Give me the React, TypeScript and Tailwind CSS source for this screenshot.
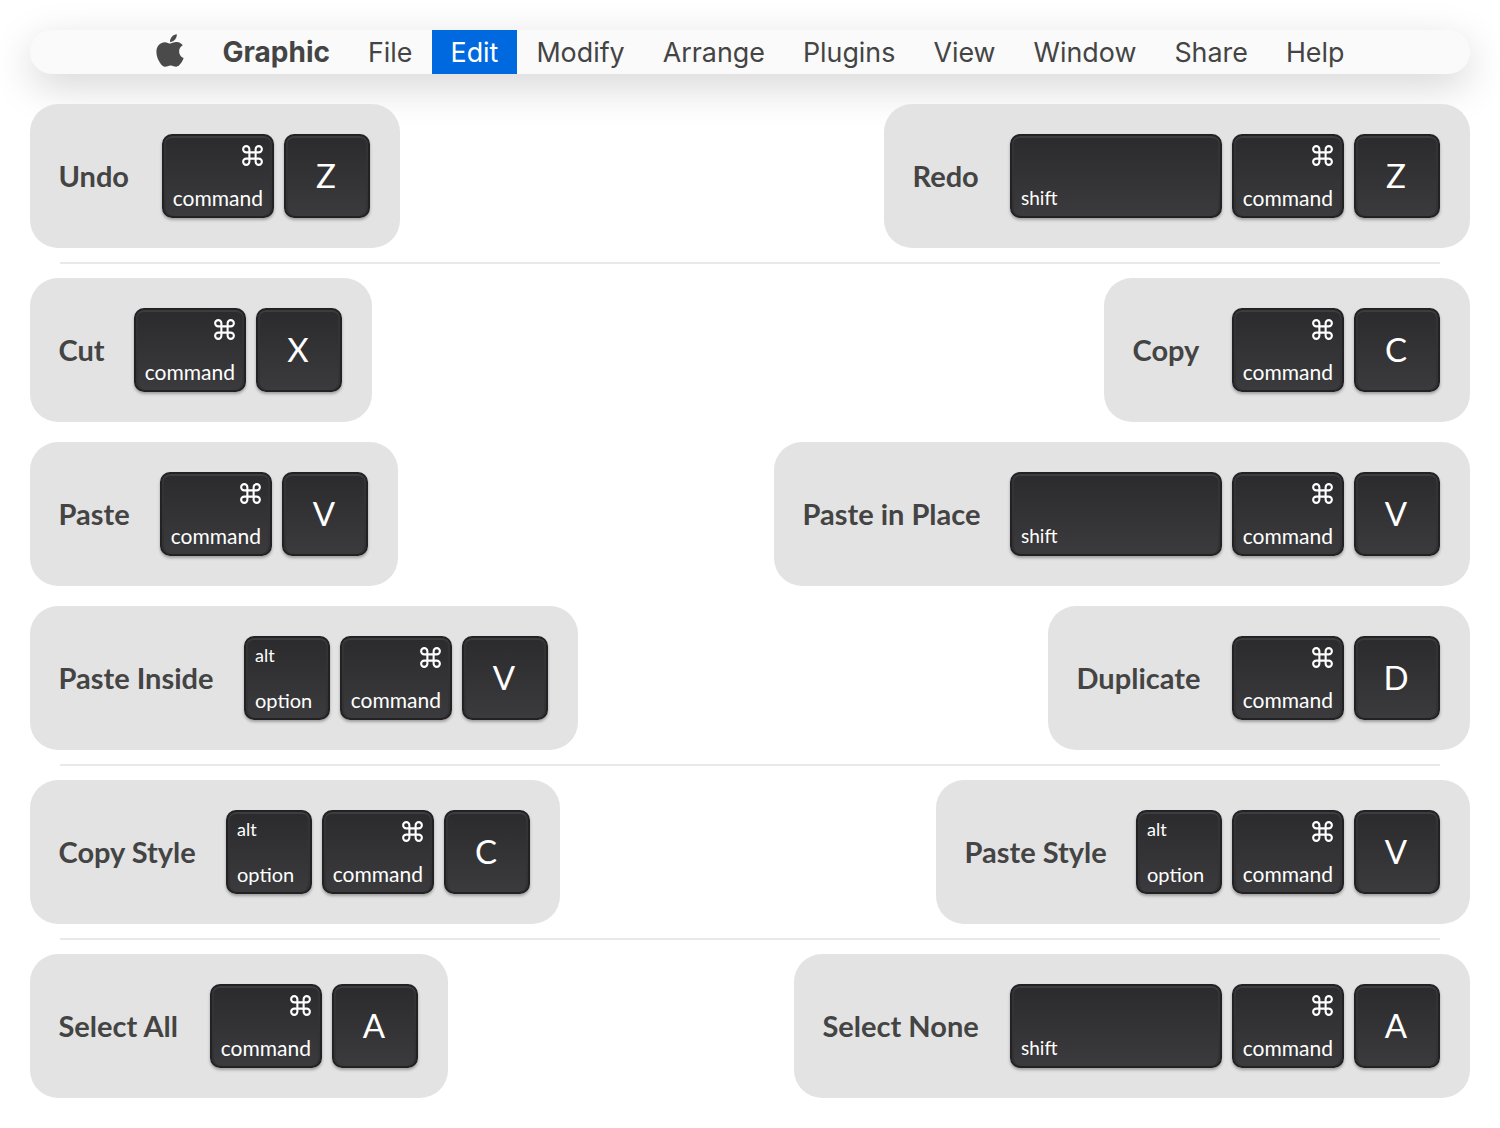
import { FaApple } from 'react-icons/fa';

type KeyName = 'command' | 'shift' | 'option' | string;

interface Shortcut {
  label: string;
  labelWidth: string;
  keys: KeyName[];
}

const menuItems = ['File', 'Edit', 'Modify', 'Arrange', 'Plugins', 'View', 'Window', 'Share', 'Help'];

function CommandGlyph() {
  return (
    <svg viewBox="0 0 24 24" className="mr-[-2px] mt-[-1px] h-[25px] w-[25px]" fill="none" stroke="#ffffff" strokeWidth="2" strokeLinecap="round" strokeLinejoin="round">
      <path d="M15 6v12a3 3 0 1 0 3-3H6a3 3 0 1 0 3 3V6a3 3 0 1 0-3 3h12a3 3 0 1 0-3-3" />
    </svg>
  );
}

function Key({ name }: { name: KeyName }) {
  const base =
    "relative h-[84px] shrink-0 rounded-[10px] border-2 border-[#222224] bg-gradient-to-b from-[#2b2b2d] to-[#3b3b3d] font-['Lato',sans-serif] text-white shadow-[inset_0_2px_0_#3d3d3f,inset_2px_0_0_#333335,inset_-2px_0_0_#333335,0_2px_3px_rgba(0,0,0,0.3)]";

  if (name === 'command') {
    return (
      <div className={`${base} flex w-[112px] flex-col items-end justify-between pt-[8px] pr-[9px] pb-[4px] pl-[9px]`}>
        <CommandGlyph />
        <span className="text-[21px] leading-[28px]">command</span>
      </div>
    );
  }
  if (name === 'shift') {
    return (
      <div className={`${base} flex w-[212px] items-end pb-[4px] pl-[9px]`}>
        <span className="text-[19px] leading-[28px]">shift</span>
      </div>
    );
  }
  if (name === 'option') {
    return (
      <div className={`${base} flex w-[86px] flex-col justify-between pt-[5px] pb-[4px] pl-[9px]`}>
        <span className="text-[18px] leading-[24px]">alt</span>
        <span className="text-[20px] leading-[28px]">option</span>
      </div>
    );
  }
  return (
    <div className={`${base} flex w-[86px] items-center justify-center pb-[2px] pr-[2px]`}>
      <span className="text-[33px] leading-none">{name}</span>
    </div>
  );
}

function Panel({ label, labelWidth, keys }: Shortcut) {
  return (
    <div className="flex h-[144px] items-center gap-[10px] rounded-[28px] bg-[#e3e3e3] pr-[30px]">
      <div className={`${labelWidth} shrink-0 pl-[28.5px] font-['Lato',sans-serif] text-[29px] font-bold whitespace-nowrap text-[#444444]`}>
        {label}
      </div>
      {keys.map((k, i) => (
        <Key key={i} name={k} />
      ))}
    </div>
  );
}

function Row({ left, right }: { left: Shortcut; right: Shortcut }) {
  return (
    <div className="flex items-start justify-between">
      <Panel {...left} />
      <Panel {...right} />
    </div>
  );
}

function Divider() {
  return <div className="mx-[30px] my-[14px] h-[2px] bg-[#e9e9e9]" />;
}

export default function App() {
  return (
    <div className="min-h-[1128px] bg-white px-[30px] pt-[30px]">
      {/* menu bar */}
      <div className="mb-[30px] flex h-[44px] items-stretch justify-center rounded-[22px] bg-[#fafafa] pl-[18px] font-['Inter',sans-serif] text-[26.85px] text-[#444444] shadow-[0_12px_40px_rgba(0,0,0,0.17)]">
        <div className="flex items-center pr-[38px]">
          <FaApple className="mt-[-3px] h-[37px] w-[30px] text-[#4a4a4a]" />
        </div>
        <div className="flex items-center pr-[19px] text-[28px] font-bold">Graphic</div>
        {menuItems.map((item) => (
          <div
            key={item}
            className={
              item === 'Edit'
                ? 'flex items-center bg-[#0069e0] px-[19px] pt-[1px] text-white'
                : 'flex items-center px-[19px] pt-[1px]'
            }
          >
            {item}
          </div>
        ))}
      </div>

      <Row
        left={{ label: 'Undo', labelWidth: 'w-[122px]', keys: ['command', 'Z'] }}
        right={{ label: 'Redo', labelWidth: 'w-[116px]', keys: ['shift', 'command', 'Z'] }}
      />
      <Divider />
      <div className="flex flex-col gap-[20px]">
        <Row
          left={{ label: 'Cut', labelWidth: 'w-[94px]', keys: ['command', 'X'] }}
          right={{ label: 'Copy', labelWidth: 'w-[118px]', keys: ['command', 'C'] }}
        />
        <Row
          left={{ label: 'Paste', labelWidth: 'w-[120px]', keys: ['command', 'V'] }}
          right={{ label: 'Paste in Place', labelWidth: 'w-[226px]', keys: ['shift', 'command', 'V'] }}
        />
        <Row
          left={{ label: 'Paste Inside', labelWidth: 'w-[204px]', keys: ['option', 'command', 'V'] }}
          right={{ label: 'Duplicate', labelWidth: 'w-[174px]', keys: ['command', 'D'] }}
        />
      </div>
      <Divider />
      <Row
        left={{ label: 'Copy Style', labelWidth: 'w-[186px]', keys: ['option', 'command', 'C'] }}
        right={{ label: 'Paste Style', labelWidth: 'w-[190px]', keys: ['option', 'command', 'V'] }}
      />
      <Divider />
      <Row
        left={{ label: 'Select All', labelWidth: 'w-[170px]', keys: ['command', 'A'] }}
        right={{ label: 'Select None', labelWidth: 'w-[206px]', keys: ['shift', 'command', 'A'] }}
      />
    </div>
  );
}
